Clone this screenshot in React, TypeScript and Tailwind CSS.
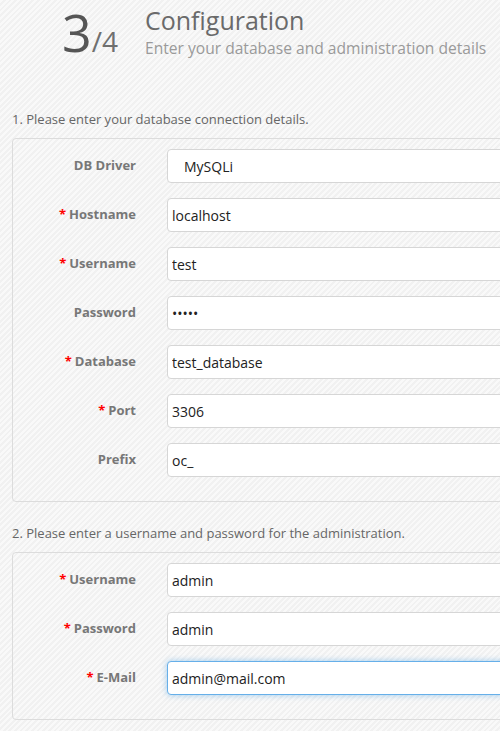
// Installer step 3: database + admin configuration form.

const font = { fontFamily: '"Open Sans", "Noto Sans", sans-serif' };

type Field = {
  label: string;
  value: string;
  required?: boolean;
  type?: 'text' | 'password' | 'select';
  focused?: boolean;
};

const dbFields: Field[] = [
  { label: 'DB Driver', value: 'MySQLi', type: 'select' },
  { label: 'Hostname', value: 'localhost', required: true },
  { label: 'Username', value: 'test', required: true },
  { label: 'Password', value: 'admin', type: 'password' },
  { label: 'Database', value: 'test_database', required: true },
  { label: 'Port', value: '3306', required: true },
  { label: 'Prefix', value: 'oc_' },
];

const adminFields: Field[] = [
  { label: 'Username', value: 'admin', required: true },
  { label: 'Password', value: 'admin', required: true },
  { label: 'E-Mail', value: 'admin@mail.com', required: true, focused: true },
];

function Row({ f }: { f: Field }) {
  const base =
    'h-[34px] w-[400px] rounded-[4px] border bg-white text-[14px] text-[#222] outline-none';
  const border = f.focused
    ? 'border-[#66afe9] shadow-[0_0_6px_rgba(102,175,233,0.6)]'
    : 'border-[#d6d6d6]';
  return (
    <div className="flex items-center h-[34px] mb-[15px] last:mb-0">
      <label className="w-[123px] text-right text-[13px] font-bold text-[#777]">
        {f.required && <span className="text-[#f00] mr-[3px]">*</span>}
        {f.label}
      </label>
      <div className="ml-[31px]">
        {f.type === 'select' ? (
          <div className={`${base} ${border} flex items-center pl-[16px] text-[#5a5575]`}>{f.value}</div>
        ) : (
          <input
            readOnly
            type={f.type === 'password' ? 'password' : 'text'}
            defaultValue={f.value}
            className={`${base} ${border} px-[4px]`}
            style={font}
          />
        )}
      </div>
    </div>
  );
}

function Box({ fields }: { fields: Field[] }) {
  return (
    <div className="ml-[12px] w-[600px] rounded-[4px] border border-[#dcdcdc] pt-[10px] pb-[24px]">
      {fields.map(f => (
        <Row key={f.label} f={f} />
      ))}
    </div>
  );
}

export default function App() {
  return (
    <div
      className="w-[500px] h-[731px] overflow-hidden bg-[repeating-linear-gradient(-45deg,#f9f9f9_0px,#f9f9f9_2px,#f1f1f1_2px,#f1f1f1_4px)]"
      style={font}
    >
      <div className="flex pt-[2px]">
        <div className="ml-[62px] w-[83px] shrink-0 flex items-baseline text-[#555]">
          <span className="text-[52px] leading-[60px]">3</span>
          <span className="text-[28px] text-[#6f6f6f]">/4</span>
        </div>
        <div className="pt-[2px]">
          <div className="text-[25px] leading-[32px] text-[#6a6a6a]">Configuration</div>
          <div className="text-[15.6px] leading-[24px] text-[#9a9a9a] whitespace-nowrap">
            Enter your database and administration details
          </div>
        </div>
      </div>

      <p className="ml-[12px] mt-[48px] mb-[10px] text-[13px] leading-[18px] text-[#666]">
        1. Please enter your database connection details.
      </p>
      <Box fields={dbFields} />

      <p className="ml-[12px] mt-[22px] mb-[10px] text-[13px] leading-[18px] text-[#666]">
        2. Please enter a username and password for the administration.
      </p>
      <Box fields={adminFields} />
    </div>
  );
}
